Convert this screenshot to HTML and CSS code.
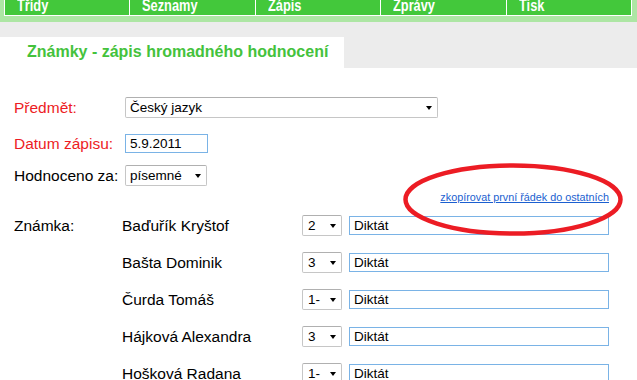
FILE: index.html
```html
<!DOCTYPE html>
<html lang="cs">
<head>
<meta charset="utf-8">
<title>Známky - zápis hromadného hodnocení</title>
<link rel="stylesheet" href="styles.css">
</head>
<body>
<div class="nav">
  <ul class="menu">
    <li><span>Třídy</span></li>
    <li><span>Seznamy</span></li>
    <li><span>Zápis</span></li>
    <li><span>Zprávy</span></li>
    <li><span>Tisk</span></li>
  </ul>
</div>
<div class="tabbar">
  <h1 class="tab">Známky - zápis hromadného hodnocení</h1>
</div>
<div class="content">
  <div class="row r1">
    <span class="lbl req">Předmět:</span>
    <div class="sel w-subj"><span>Český jazyk</span><i class="arr"></i></div>
  </div>
  <div class="row r2">
    <span class="lbl req">Datum zápisu:</span>
    <div class="inp w-date">5.9.2011</div>
  </div>
  <div class="row r3">
    <span class="lbl">Hodnoceno za:</span>
    <div class="sel w-type"><span>písemné</span><i class="arr"></i></div>
  </div>
  <div class="copy"><a href="#">zkopírovat první řádek do ostatních</a></div>
  <div class="grades">
    <span class="glbl">Známka:</span>
    <div class="list">
      <div class="grow"><span class="name">Baďuřík Kryštof</span><div class="sel w-g"><span>2</span><i class="arr"></i></div><div class="inp w-note">Diktát</div></div>
      <div class="grow"><span class="name">Bašta Dominik</span><div class="sel w-g"><span>3</span><i class="arr"></i></div><div class="inp w-note">Diktát</div></div>
      <div class="grow"><span class="name">Čurda Tomáš</span><div class="sel w-g"><span>1-</span><i class="arr"></i></div><div class="inp w-note">Diktát</div></div>
      <div class="grow"><span class="name">Hájková Alexandra</span><div class="sel w-g"><span>3</span><i class="arr"></i></div><div class="inp w-note">Diktát</div></div>
      <div class="grow"><span class="name">Hošková Radana</span><div class="sel w-g"><span>1-</span><i class="arr"></i></div><div class="inp w-note">Diktát</div></div>
    </div>
  </div>
  <svg class="mark" width="226" height="80" viewBox="0 0 226 80" aria-hidden="true">
    <ellipse cx="113" cy="39.5" rx="107.5" ry="34" fill="none" stroke="#ec1c24" stroke-width="4.5"/>
  </svg>
</div>
</body>
</html>
```
FILE: styles.css
```css
html { overflow: hidden; }
body {
  margin: 0;
  background: #fff;
  font-family: "Liberation Sans", Arial, sans-serif;
  color: #000;
}

/* top navigation */
.nav {
  height: 22px;
  overflow: hidden;
  background: #ade6a4;
  padding-left: 4px;
}
.menu {
  list-style: none;
  margin: -10px 0 0;
  padding: 0;
  display: flex;
  width: 627px;
  height: 25px;
  border-left: 1px solid #fff;
  border-bottom: 1px solid #fff;
}
.menu li {
  flex: 1;
  background: #43c83b;
  border-right: 1px solid #fff;
  color: #fff;
  font-family: "Liberation Sans", Arial, sans-serif;
  font-weight: bold;
  font-size: 16px;
  line-height: 18px;
  padding: 7px 0 0 12px;
}
.menu li span {
  display: inline-block;
  transform: scaleX(0.8);
  transform-origin: left center;
}

/* tab */
.tabbar {
  background: #ececec;
  padding-top: 15px;
}
.tab {
  margin: 0;
  box-sizing: border-box;
  width: 344px;
  height: 31px;
  background: #fff;
  padding: 6px 0 0 27px;
  font: bold 16px/18px "Liberation Sans", Arial, sans-serif;
  color: #44c23c;
}

/* form */
.content {
  position: relative;
  padding: 29px 0 0 14px;
  font-size: 15.5px;
}
.row {
  display: flex;
  align-items: center;
}
.lbl { width: 111px; }
.req { color: #ed1c24; }
.r1 { height: 21px; }
.r2 { height: 19px; margin-top: 16px; }
.r3 { height: 21px; margin-top: 12px; }

.sel {
  box-sizing: border-box;
  height: 21px;
  border: 1px solid #c6c6c6;
  border-top-color: #b0b0b0;
  border-radius: 2px;
  background: #fff;
  display: flex;
  align-items: center;
  justify-content: space-between;
  padding: 0 5px 0 4px;
  font-size: 13.5px;
}
.arr {
  width: 0;
  height: 0;
  border-left: 3.5px solid transparent;
  border-right: 3.5px solid transparent;
  border-top: 4px solid #000;
}
.inp {
  box-sizing: border-box;
  height: 19px;
  border: 1px solid #7ab3e6;
  padding: 0 4px;
  line-height: 17px;
  font-size: 13.5px;
  background: #fff;
}
.w-subj { width: 313px; }
.w-type { width: 82px; }
.w-date { width: 83px; }

.copy {
  margin-top: 5px;
  width: 595px;
  height: 13px;
  text-align: right;
  font-size: 10.8px;
  line-height: 13px;
}
.copy a { color: #1b5fd0; }

.grades {
  display: flex;
  margin-top: 11px;
}
.glbl {
  width: 108px;
  line-height: 21px;
}
.list {
  display: flex;
  flex-direction: column;
  gap: 16px;
}
.grow {
  display: flex;
  align-items: center;
  height: 21px;
}
.name { width: 180px; }
.w-g { width: 40px; padding-left: 5px; }
.w-note { width: 260px; margin-left: 7px; }

.mark {
  position: absolute;
  left: 400px;
  top: 92px;
}
```
